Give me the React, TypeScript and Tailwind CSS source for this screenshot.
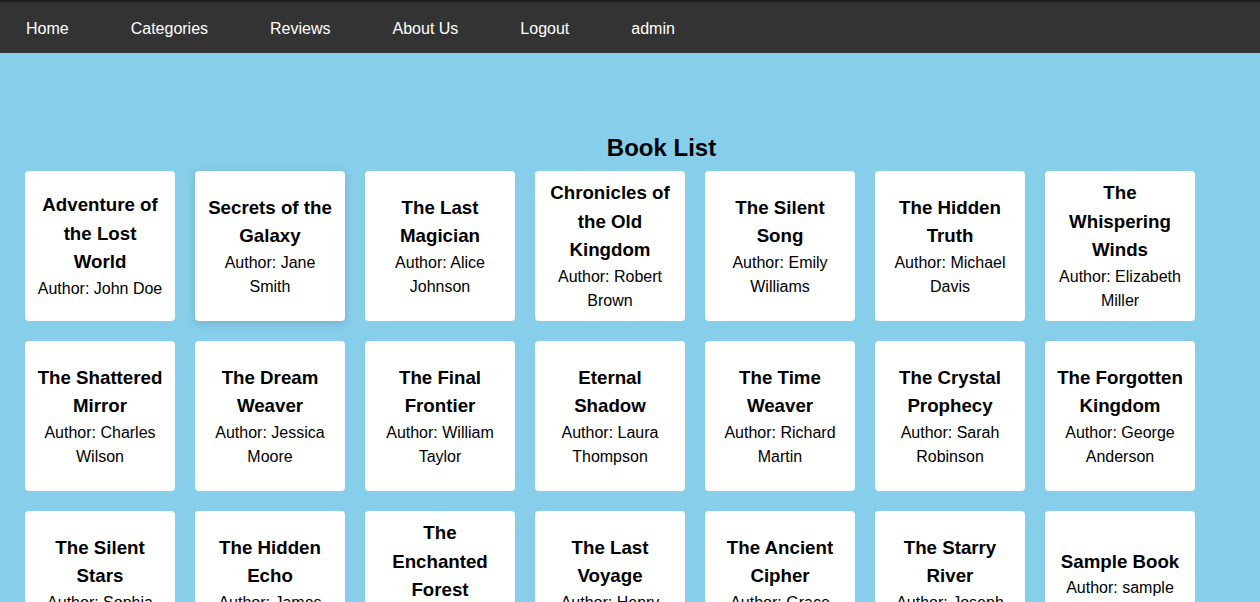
import React from 'react';

interface Book {
    title: string;
    author: string;
    extra?: boolean;
}

const books: Book[] = [
    { title: 'Adventure of the Lost World', author: 'John Doe' },
    { title: 'Secrets of the Galaxy', author: 'Jane Smith' },
    { title: 'The Last Magician', author: 'Alice Johnson' },
    { title: 'Chronicles of the Old Kingdom', author: 'Robert Brown' },
    { title: 'The Silent Song', author: 'Emily Williams' },
    { title: 'The Hidden Truth', author: 'Michael Davis' },
    { title: 'The Whispering Winds', author: 'Elizabeth Miller' },
    { title: 'The Shattered Mirror', author: 'Charles Wilson' },
    { title: 'The Dream Weaver', author: 'Jessica Moore' },
    { title: 'The Final Frontier', author: 'William Taylor' },
    { title: 'Eternal Shadow', author: 'Laura Thompson' },
    { title: 'The Time Weaver', author: 'Richard Martin' },
    { title: 'The Crystal Prophecy', author: 'Sarah Robinson' },
    { title: 'The Forgotten Kingdom', author: 'George Anderson' },
    { title: 'The Silent Stars', author: 'Sophia Clark' },
    { title: 'The Hidden Echo', author: 'James Lewis' },
    { title: 'The Enchanted Forest', author: 'Olivia Walker' },
    { title: 'The Last Voyage', author: 'Henry Hall' },
    { title: 'The Ancient Cipher', author: 'Grace Young' },
    { title: 'The Starry River', author: 'Joseph King' },
    { title: 'Sample Book', author: 'sample', extra: true },
];

const links = ['Home', 'Categories', 'Reviews', 'About Us', 'Logout', 'admin'];

export default function App() {
    return (
        <div className="min-h-[602px] bg-[#87ceeb] font-['Liberation_Sans',Arial,sans-serif] text-black">
            <nav className="h-[53px] bg-[#333333] border-t-2 border-[#1e1e1e] flex items-center pt-[3px] pl-[26px] gap-[62px]">
                {links.map(link => (
                    <a key={link} href="#" className="text-white text-[16px] leading-[20px]">
                        {link}
                    </a>
                ))}
            </nav>

            <main className="pt-[81px]">
                <h2 className="pl-[63px] text-center text-[24px] leading-[28px] font-bold mb-[9px]">Book List</h2>
                <div className="pl-[25px] grid grid-cols-[repeat(7,150px)] gap-[20px]">
                    {books.map((book, i) => (
                        <div
                            key={i}
                            className={`h-[150px] bg-white rounded-[4px] px-[10px] flex flex-col items-center justify-center text-center ${i === 1 ? 'shadow-[0_2px_8px_rgba(0,0,0,0.15)]' : ''}`}
                        >
                            <h3 className="text-[18.72px] leading-[28.5px] font-bold">{book.title}</h3>
                            <p className="text-[16px] leading-[24px]">Author: {book.author}</p>
                            {/* sample entry carries an empty description line */}
                            {book.extra && <p className="h-[24px]"></p>}
                        </div>
                    ))}
                </div>
            </main>
        </div>
    );
}
